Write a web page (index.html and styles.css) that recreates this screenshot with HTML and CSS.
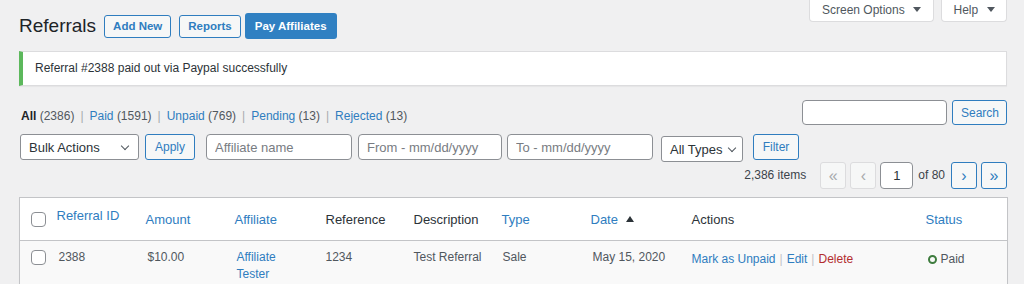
FILE: index.html
```html
<!DOCTYPE html>
<html lang="en">
<head>
  <meta charset="UTF-8" />
  <title>Referrals</title>
  <link rel="stylesheet" href="styles.css">
</head>
<body>
  <div class="wrap">
    <!-- CABEÇALHO -->
    <header class="page-head">
      <div class="title-group">
        <h1>Referrals</h1>
        <a class="btn-outline" href="#">Add New</a>
        <a class="btn-outline reports" href="#">Reports</a>
        <a class="btn-primary" href="#">Pay Affiliates</a>
      </div>
      <div class="screen-links">
        <button class="tab tab-options">Screen Options <span class="caret"></span></button>
        <button class="tab tab-help">Help <span class="caret"></span></button>
      </div>
    </header>

    <div class="notice">Referral #2388 paid out via Paypal successfully</div>

    <!-- FILTROS -->
    <div class="views-row">
      <ul class="subsubsub">
        <li><strong>All</strong> <span class="count">(2386)</span></li>
        <li class="sep">|</li>
        <li><a href="#">Paid</a> <span class="count">(1591)</span></li>
        <li class="sep">|</li>
        <li><a href="#">Unpaid</a> <span class="count">(769)</span></li>
        <li class="sep">|</li>
        <li><a href="#">Pending</a> <span class="count">(13)</span></li>
        <li class="sep">|</li>
        <li><a href="#">Rejected</a> <span class="count">(13)</span></li>
      </ul>
      <div class="search-box">
        <input type="text" class="search-input">
        <button class="btn-secondary search-btn">Search</button>
      </div>
    </div>

    <div class="filters">
      <div class="select bulk">Bulk Actions <span class="chevron"></span></div>
      <button class="btn-secondary apply">Apply</button>
      <input type="text" class="field affiliate" placeholder="Affiliate name">
      <input type="text" class="field from" placeholder="From - mm/dd/yyyy">
      <input type="text" class="field to" placeholder="To - mm/dd/yyyy">
      <div class="select types">All Types <span class="chevron"></span></div>
      <button class="btn-secondary filter">Filter</button>
    </div>

    <div class="pagination">
      <span class="items">2,386 items</span>
      <span class="page-btn disabled">&laquo;</span>
      <span class="page-btn disabled">&lsaquo;</span>
      <input type="text" class="page-input" value="1">
      <span class="of">of 80</span>
      <a class="page-btn" href="#">&rsaquo;</a>
      <a class="page-btn" href="#">&raquo;</a>
    </div>

    <!-- TABELA -->
    <table class="list">
      <colgroup>
        <col style="width:29px"><col style="width:89px"><col style="width:89px"><col style="width:89px">
        <col style="width:88px"><col style="width:89px"><col style="width:90px"><col style="width:99px">
        <col style="width:236px"><col style="width:90px">
      </colgroup>
      <thead>
        <tr>
          <th class="cb"><span class="checkbox"></span></th>
          <th class="sortable first"><a href="#">Referral ID</a></th>
          <th class="sortable"><a href="#">Amount</a></th>
          <th class="sortable"><a href="#">Affiliate</a></th>
          <th>Reference</th>
          <th>Description</th>
          <th class="sortable type"><a href="#">Type</a></th>
          <th class="sortable"><a href="#">Date <span class="sort-up"></span></a></th>
          <th>Actions</th>
          <th class="sortable"><a href="#">Status</a></th>
        </tr>
      </thead>
      <tbody>
        <tr>
          <td class="cb"><span class="checkbox"></span></td>
          <td>2388</td>
          <td>$10.00</td>
          <td><a href="#">Affiliate Tester</a></td>
          <td>1234</td>
          <td>Test Referral</td>
          <td>Sale</td>
          <td>May 15, 2020</td>
          <td class="actions"><a href="#">Mark as Unpaid</a><span class="bar">|</span><a href="#">Edit</a><span class="bar">|</span><a class="delete" href="#">Delete</a></td>
          <td class="status"><span class="ring"></span>Paid</td>
        </tr>
      </tbody>
    </table>
  </div>
</body>
</html>
```

FILE: styles.css
```css
body {
  margin: 0;
  background-color: #f0f0f1;
  color: #3c434a;
  font-family: 'Liberation Sans', Arial, sans-serif;
  font-size: 12px;
  line-height: 17px;
  height: 284px;
  overflow: hidden;
}

a {
  color: #2f7dbf;
  text-decoration: none;
}

.wrap {
  padding: 0 17px 0 19px;
}

/* cabeçalho */
.page-head {
  display: flex;
  justify-content: space-between;
  align-items: flex-start;
}

.title-group {
  display: flex;
  align-items: center;
  margin-top: 13px;
}

h1 {
  margin: 0 8px 0 0;
  font-size: 19px;
  font-weight: 400;
  line-height: 26px;
  color: #1d2327;
}

.btn-outline {
  box-sizing: border-box;
  height: 23px;
  line-height: 21px;
  padding: 0 8px;
  border: 1px solid #2f7dbf;
  border-radius: 3px;
  background-color: #f6f7f7;
  font-size: 11.5px;
  font-weight: 700;
  margin-right: 8px;
}

.btn-outline.reports {
  margin-right: 4px;
}

.btn-primary {
  box-sizing: border-box;
  height: 26px;
  line-height: 26px;
  padding: 0 10px;
  border-radius: 3px;
  background-color: #3080c2;
  color: #fff;
  font-size: 11.5px;
  font-weight: 700;
}

.screen-links {
  display: flex;
  gap: 7px;
}

.tab {
  box-sizing: border-box;
  height: 23px;
  margin-top: -1px;
  border: 1px solid #dcdcde;
  border-top: none;
  border-radius: 0 0 4px 4px;
  background-color: #fff;
  color: #50575e;
  font-family: inherit;
  font-size: 12px;
  padding: 0;
}

.tab-options { width: 125px; }
.tab-help { width: 66px; }

.caret {
  display: inline-block;
  margin-left: 5px;
  border-left: 4px solid transparent;
  border-right: 4px solid transparent;
  border-top: 5px solid #50575e;
  vertical-align: 2px;
}

/* aviso */
.notice {
  margin-top: 12px;
  background-color: #fff;
  border: 1px solid #dcdcde;
  border-left: 4px solid #5cb85c;
  padding: 8px 12px;
  color: #2c3338;
  box-shadow: 0 1px 1px rgba(0, 0, 0, 0.04);
}

/* visões e busca */
.views-row {
  display: flex;
  justify-content: space-between;
  align-items: flex-end;
  margin-top: 14px;
}

.subsubsub {
  list-style: none;
  margin: 0 0 0 2px;
  padding: 0;
  display: flex;
  gap: 6px;
  line-height: 17px;
}

.subsubsub strong {
  color: #1d2327;
  font-weight: 700;
}

.count {
  color: #50575e;
}

.sep {
  color: #a7aaad;
}

.search-box {
  display: flex;
  gap: 5px;
}

.search-input {
  box-sizing: border-box;
  width: 145px;
  height: 25px;
  border: 1px solid #8c8f94;
  border-radius: 4px;
  background-color: #fff;
  margin: 0;
}

.btn-secondary {
  box-sizing: border-box;
  height: 26px;
  padding: 0 8px;
  border: 1px solid #2f7dbf;
  border-radius: 3px;
  background-color: #f6f7f7;
  color: #2f7dbf;
  font-family: inherit;
  font-size: 12px;
  margin: 0;
}

.search-btn {
  width: 55px;
  height: 25px;
}

/* linha de filtros */
.filters {
  display: flex;
  align-items: flex-start;
  margin-top: 9px;
  margin-left: 1px;
}

.select {
  box-sizing: border-box;
  height: 26px;
  display: flex;
  align-items: center;
  justify-content: space-between;
  padding: 0 8px;
  border: 1px solid #8c8f94;
  border-radius: 3px;
  background-color: #fff;
  color: #2c3338;
  font-size: 13px;
}

.chevron {
  width: 5px;
  height: 5px;
  border-right: 1.5px solid #50575e;
  border-bottom: 1.5px solid #50575e;
  transform: rotate(45deg);
  margin-top: -3px;
}

.bulk {
  width: 119px;
  padding-right: 10px;
}

.apply {
  width: 50px;
  margin-left: 6px;
}

.field {
  box-sizing: border-box;
  height: 26px;
  border: 1px solid #8c8f94;
  border-radius: 4px;
  background-color: #fff;
  padding: 0 8px;
  font-family: inherit;
  font-size: 13px;
  margin: 0;
}

.field::placeholder {
  color: #787c82;
}

.affiliate { width: 146px; margin-left: 11px; }
.from { width: 144px; margin-left: 6px; }
.to { width: 146px; margin-left: 5px; }

.types {
  width: 82px;
  margin-left: 8px;
  margin-top: 2px;
  padding-right: 7px;
}

.filter {
  width: 46px;
  margin-left: 10px;
}

/* paginação */
.pagination {
  display: flex;
  justify-content: flex-end;
  align-items: center;
  height: 27px;
  color: #3c434a;
}

.items {
  margin-right: 10px;
}

.page-btn {
  box-sizing: border-box;
  width: 26px;
  height: 27px;
  display: flex;
  align-items: center;
  justify-content: center;
  border: 1px solid #2f7dbf;
  border-radius: 3px;
  background-color: #f6f7f7;
  color: #2f7dbf;
  font-size: 16px;
  margin-left: 4px;
}

.page-btn.disabled {
  border-color: #dcdcde;
  color: #a7aaad;
}

.page-btn:first-of-type {
  margin-left: 0;
}

.page-input {
  box-sizing: border-box;
  width: 33px;
  height: 27px;
  margin: 0 0 0 4px;
  border: 1px solid #8c8f94;
  border-radius: 4px;
  background-color: #fff;
  text-align: center;
  font-family: inherit;
  font-size: 13px;
  color: #2c3338;
}

.of {
  margin: 0 6px 0 5px;
}

/* tabela */
.list {
  margin-top: 8px;
  width: 988px;
  table-layout: fixed;
  border-collapse: collapse;
  border: 1px solid #c3c4c7;
  box-shadow: 0 1px 1px rgba(0, 0, 0, 0.04);
}

.list thead tr {
  height: 43px;
}

.list th {
  background-color: #fff;
  padding: 0 10px;
  text-align: left;
  font-size: 13px;
  font-weight: 400;
  color: #2c3338;
  border-bottom: 1px solid #c3c4c7;
  vertical-align: middle;
}

.list th.sortable {
  padding-left: 8px;
}

.list th.type {
  padding-left: 9px;
}

.list th.first {
  vertical-align: top;
  padding-top: 9px;
}

.list th.cb,
.list td.cb {
  padding: 0 0 0 11px;
}

.list td.cb {
  vertical-align: top;
  padding-top: 9px;
}

.checkbox {
  display: block;
  box-sizing: border-box;
  width: 15px;
  height: 15px;
  border: 1px solid #8c8f94;
  border-radius: 4px;
  background-color: #fff;
}

.sort-up {
  display: inline-block;
  margin-left: 4px;
  border-left: 4px solid transparent;
  border-right: 4px solid transparent;
  border-bottom: 6px solid #2c3338;
  vertical-align: 2px;
}

.list td {
  background-color: #f9f9f9;
  padding: 8px 6px 8px 10px;
  vertical-align: top;
  color: #50575e;
  line-height: 17px;
}

.actions {
  padding-top: 10px !important;
}

.bar {
  color: #c3c4c7;
  margin: 0 4px;
}

.delete {
  color: #b32d2e;
}

.status {
  padding-top: 10px !important;
  color: #3c434a;
}

.ring {
  display: inline-block;
  box-sizing: border-box;
  width: 9px;
  height: 9px;
  border: 2px solid #3e7c3e;
  border-radius: 50%;
  margin-right: 4px;
  vertical-align: -1px;
}
```
